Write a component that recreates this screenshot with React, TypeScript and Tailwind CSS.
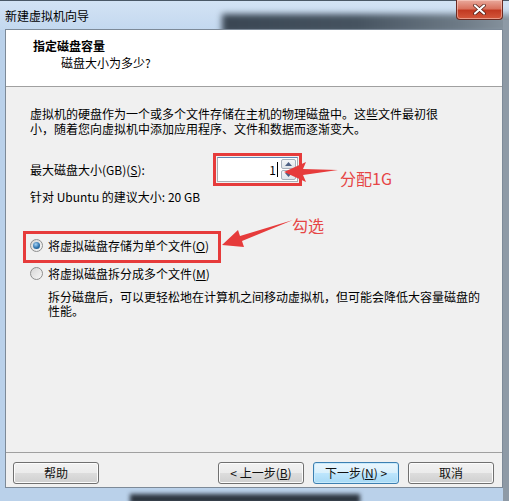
import React from "react";

const U = ({ children }: { children: React.ReactNode }) => (
  <span className="underline underline-offset-[1px]">{children}</span>
);

const Btn = ({ children, primary }: { children: React.ReactNode; primary?: boolean }) => (
  <div
    className={
      primary
        ? "w-[86px] h-[22px] rounded-[3px] border border-[#3c7fb1] shadow-[inset_0_0_0_1px_#c8eafc] bg-[linear-gradient(#eaf6fd_0%,#d9f0fc_50%,#bee6fd_50%,#a7d9f5_100%)] flex items-center justify-center text-[12px] leading-[14px] text-[#111]"
        : "w-[86px] h-[22px] rounded-[3px] border border-[#707070] shadow-[inset_0_0_0_1px_#fcfcfc] bg-[linear-gradient(#f2f2f2_0%,#ebebeb_50%,#dddddd_50%,#cfcfcf_100%)] flex items-center justify-center text-[12px] leading-[14px] text-[#111]"
    }
  >
    {children}
  </div>
);

const Radio = ({ checked }: { checked?: boolean }) => (
  <div className="w-[13px] h-[13px] rounded-full border border-[#8e8f8f] bg-[linear-gradient(135deg,#d6d6d6,#f7f7f7)] flex items-center justify-center shrink-0">
    {checked && (
      <div className="w-[7px] h-[7px] rounded-full bg-[radial-gradient(circle_at_40%_35%,#a6d3f5_0%,#2f73ad_55%,#17466f_100%)]" />
    )}
  </div>
);

export default function App() {
  return (
    <div
      className="relative w-[509px] h-[501px] overflow-hidden bg-[#bad1ea] text-[#000]"
      style={{ fontFamily: '"Noto Sans CJK SC", "Noto Sans", sans-serif' }}
    >
      {/* title bar background decorations */}
      <div className="absolute left-0 top-0 w-[509px] h-[30px] bg-[linear-gradient(180deg,#d3e3f4_0%,#c3d8ef_100%)]" />
      <div className="absolute left-[222px] top-[14px] w-[300px] h-[20px] bg-[linear-gradient(90deg,#3a4653_0%,#465360_45%,#6e7b87_80%,#8d99a4_100%)] blur-[3px]" />
      <div className="absolute left-0 top-0 w-[509px] h-px bg-[#4a5866]" />
      <div className="absolute right-0 top-[20px] w-[6px] h-[481px] bg-[#8e9aa6]" />
      <div className="absolute left-[130px] top-[494px] w-[230px] h-[10px] bg-[#2d3640] blur-[2px]" />

      {/* title */}
      <div className="relative h-[29px] pl-[5px] pt-[8px] text-[12px] leading-[16px] text-[#000]">
        新建虚拟机向导
      </div>

      {/* close button */}
      <div className="absolute left-[456px] top-0 w-[47px] h-[20px] rounded-b-[4px] border border-t-0 border-[#6b2b22] bg-[linear-gradient(180deg,#e9a99c_0%,#d9735f_45%,#c23a22_55%,#d4583c_100%)] flex items-center justify-center shadow-[inset_0_0_0_1px_rgba(255,220,210,0.5)]">
        <svg width="13" height="11" viewBox="0 0 13 11">
          <path d="M2 1.5 L11 9.5 M11 1.5 L2 9.5" stroke="#4a1a12" strokeWidth="3.6" strokeLinecap="round" />
          <path d="M2 1.5 L11 9.5 M11 1.5 L2 9.5" stroke="#ffffff" strokeWidth="2.2" strokeLinecap="round" />
        </svg>
      </div>

      {/* client area */}
      <div className="relative ml-[5px] w-[498px] h-[459px] border border-[#7d8a98] bg-[#f0f0f0] flex flex-col">
        {/* header */}
        <div className="h-[57px] bg-white border-b border-[#a0a0a0] pt-[7px] shrink-0">
          <div className="pl-[27px] text-[12px] leading-[17px] font-bold">指定磁盘容量</div>
          <div className="pl-[55px] text-[12px] leading-[17px]">磁盘大小为多少?</div>
        </div>

        {/* body */}
        <div className="flex-1 pl-[24px] pr-[20px] pt-[19px] text-[12px]">
          <div className="leading-[15px]">
            <div>虚拟机的硬盘作为一个或多个文件存储在主机的物理磁盘中。这些文件最初很</div>
            <div>小，随着您向虚拟机中添加应用程序、文件和数据而逐渐变大。</div>
          </div>

          <div className="mt-[17px] flex items-center h-[33px]">
            <div className="w-[183px] leading-[15px]">
              最大磁盘大小(GB)(<U>S</U>):
            </div>
            <div className="w-[89px] h-[33px] border-[3px] border-[#e63b3b] p-px">
              <div className="w-full h-full bg-white border border-[#abadb3] border-t-[#5f87b5] flex items-center">
                <div className="flex-1 flex justify-end items-center pr-[3px] leading-[15px]">
                  1<span className="inline-block w-px h-[15px] bg-black ml-px" />
                </div>
                <div className="w-[16px] h-full flex flex-col gap-px py-px pr-px">
                  <div className="flex-1 rounded-[2px] border border-[#a6b0bb] bg-[linear-gradient(#f4f6f8,#dfe5ea)] flex items-center justify-center">
                    <svg width="7" height="4" viewBox="0 0 7 4"><path d="M0 4 L3.5 0 L7 4Z" fill="#4d6185" /></svg>
                  </div>
                  <div className="flex-1 rounded-[2px] border border-[#a6b0bb] bg-[linear-gradient(#f4f6f8,#dfe5ea)] flex items-center justify-center">
                    <svg width="7" height="4" viewBox="0 0 7 4"><path d="M0 0 L3.5 4 L7 0Z" fill="#4d6185" /></svg>
                  </div>
                </div>
              </div>
            </div>
          </div>

          <div className="mt-[3px] leading-[15px]">针对 Ubuntu 的建议大小: 20 GB</div>

          <div className="mt-[34px] flex items-center gap-[5px] leading-[15px]">
            <Radio checked />
            <div>将虚拟磁盘存储为单个文件(<U>O</U>)</div>
          </div>
          <div className="mt-[13px] flex items-center gap-[5px] leading-[15px]">
            <Radio />
            <div>将虚拟磁盘拆分成多个文件(<U>M</U>)</div>
          </div>
          <div className="mt-[9px] pl-[18px] leading-[14px]">
            <div>拆分磁盘后，可以更轻松地在计算机之间移动虚拟机，但可能会降低大容量磁盘的</div>
            <div>性能。</div>
          </div>
        </div>

        {/* footer */}
        <div className="h-[35px] shrink-0 border-t border-[#a0a0a0] flex items-start pt-[9px] pl-[7px] pr-[8px]">
          <Btn>帮助</Btn>
          <div className="flex-1" />
          <div className="flex gap-[9px]">
            <Btn>&lt; 上一步(<U>B</U>)</Btn>
            <Btn primary>下一步(<U>N</U>) &gt;</Btn>
            <Btn>取消</Btn>
          </div>
        </div>
      </div>

      {/* annotations */}
      <div className="absolute left-[23px] top-[231px] w-[198px] h-[32px] border-[3px] border-[#e63b3b] pointer-events-none" />
      <svg className="absolute left-0 top-0 pointer-events-none" width="509" height="501" viewBox="0 0 509 501">
        <polygon points="284,172 306,162 303,169 338,170 303,175 306,182" fill="#e63b3b" />
        <polygon points="222,245 238,230 240,236 293,220 242,241 244,247" fill="#e63b3b" />
      </svg>
      <div className="absolute left-[340px] top-[168px] text-[16px] leading-[20px] text-[#e64545]">分配1G</div>
      <div className="absolute left-[292px] top-[215px] text-[16px] leading-[20px] text-[#e64545]">勾选</div>
    </div>
  );
}
